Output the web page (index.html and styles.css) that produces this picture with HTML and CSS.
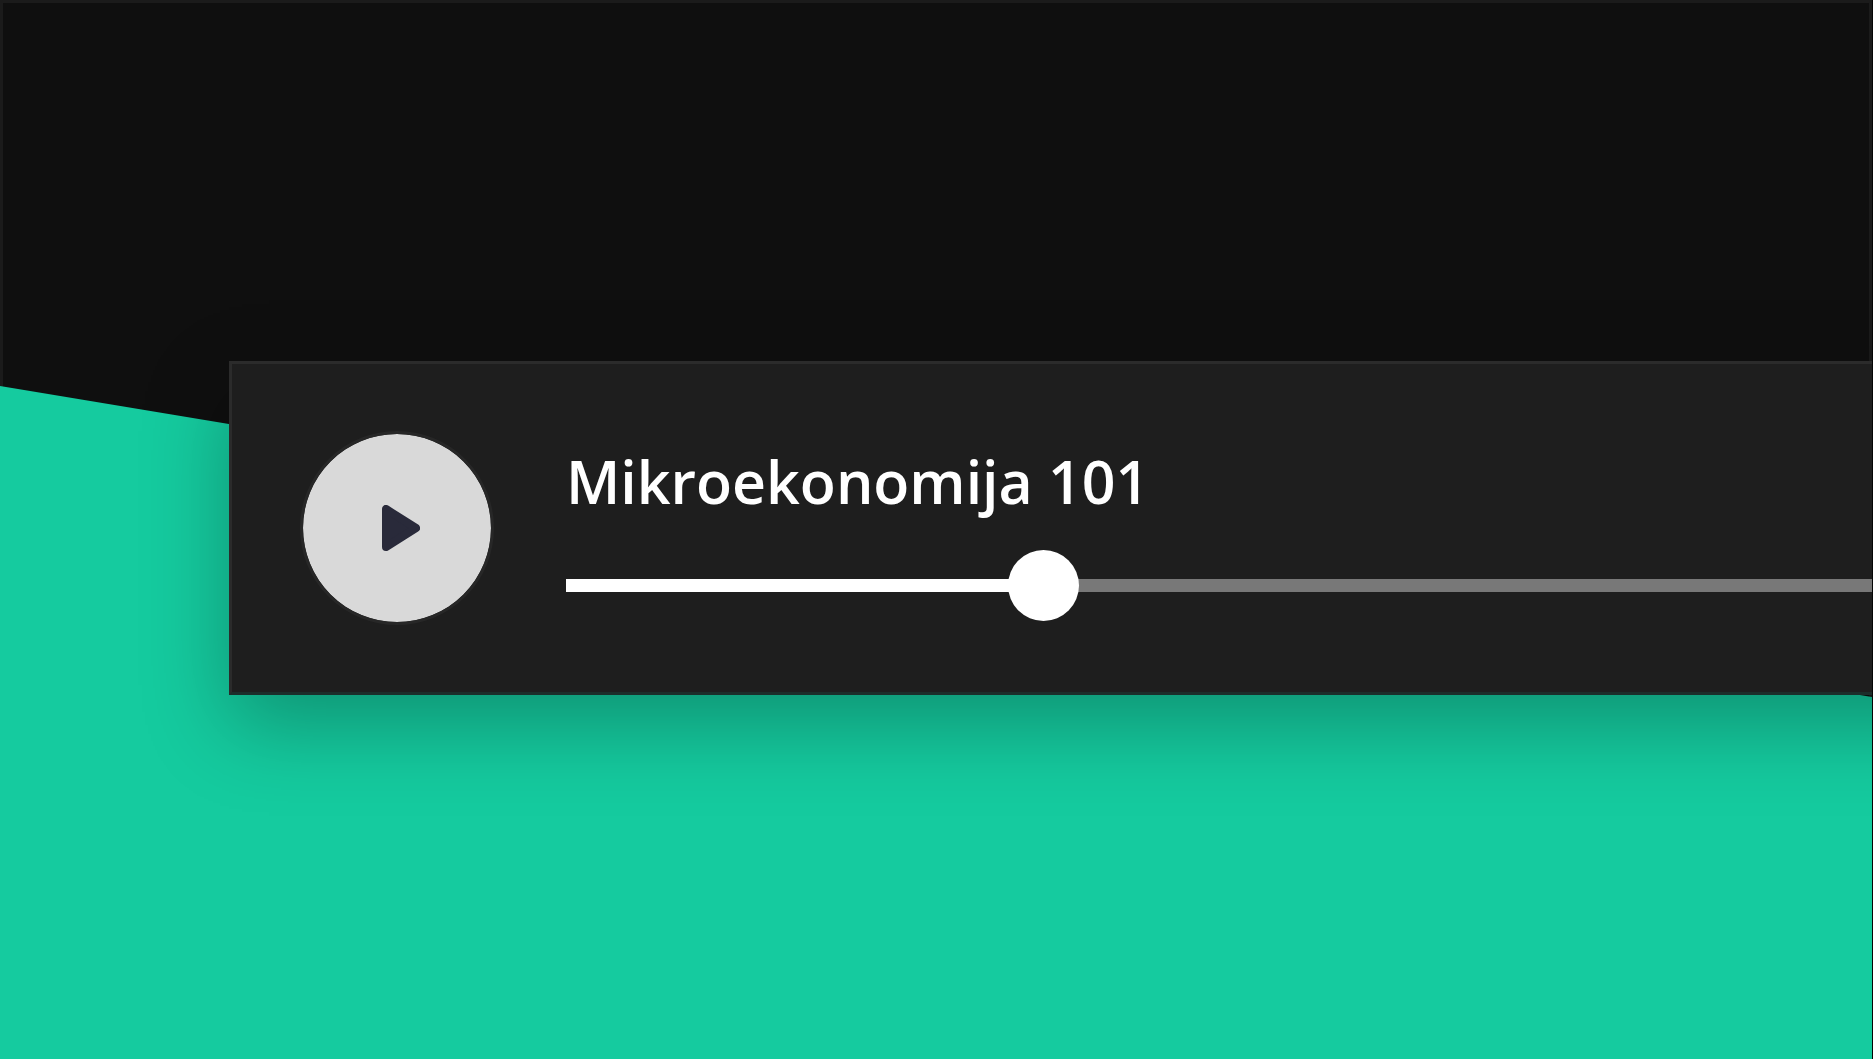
FILE: index.html
```html
<!DOCTYPE html>
<html lang="sl">
<head>
	<meta charset="UTF-8">
	<meta name="viewport" content="width=device-width, initial-scale=1.0">
	<title>Mikroekonomija 101</title>
	<link rel="stylesheet" href="styles.css">
</head>
<body>
	<main class="page">
		<div class="slope"></div>
		<section class="player">
			<button class="play" type="button" aria-label="Play">
				<svg class="play-icon" viewBox="0 0 38 46" aria-hidden="true">
					<path d="M4 4 V42 L34 23 Z" />
				</svg>
			</button>
			<div class="track">
				<label class="title" for="progress">Mikroekonomija 101</label>
				<input class="progress" id="progress" type="range" min="0" max="1000" value="358">
			</div>
		</section>
	</main>
</body>
</html>
```

FILE: styles.css
```css
:root {
	--green: #15cb9f;
	--dark: #0f0f0f;
	--frame: #1b1b1b;
	--card: #1e1e1e;
	--line: #2b2b2b;
	--rail: #787878;
}

* { box-sizing: border-box; padding: 0; margin: 0; }

body {
	background: #050505;
	font-family: "Open Sans", Lato, sans-serif;
}

/* slope and player share the same grid cell */
.page {
	display: grid;
	align-items: center;
	min-height: 100vh;
	margin-right: 1px;
	padding-bottom: 3px;
	overflow: hidden;
	background: var(--dark);
	box-shadow: inset 0 0 0 3px var(--frame);
}

.slope {
	grid-area: 1 / 1;
	align-self: stretch;
	margin-bottom: -3px;
	background: var(--green);
	clip-path: polygon(0 386px, 100% 697px, 100% 100%, 0 100%);
}

/* runs past the right edge so the shadow does not fade out there */
.player {
	grid-area: 1 / 1;
	z-index: 1;
	display: flex;
	align-items: center;
	gap: 72px;
	margin: 0 -100px 0 229px;
	padding: 67px 100px 67px 68px;
	background: var(--card);
	border: 3px solid var(--line);
	border-right: none;
	border-bottom-color: #1c2e2b;
	box-shadow: 0 30px 80px rgba(0, 0, 0, 0.28);
}

.play {
	display: flex;
	align-items: center;
	justify-content: center;
	flex: none;
	width: 194px;
	height: 194px;
	padding-left: 8px;
	background: #d9d9d9;
	background-clip: padding-box;
	border: 3px solid #272727;
	border-radius: 50%;
}

.play-icon {
	width: 38px;
	height: 46px;
	fill: #292a3a;
	stroke: #292a3a;
	stroke-width: 8;
	stroke-linejoin: round;
}

.track {
	display: flex;
	flex-direction: column;
	flex: 1;
	gap: 33px;
	padding-top: 10px;
}

.title {
	color: #fff;
	font-size: 59px;
	font-weight: 600;
	line-height: 72px;
}

.progress {
	appearance: none;
	width: 100%;
	height: 71px;
	background: linear-gradient(90deg, #fff 36%, var(--rail) 36%) center / 100% 13px no-repeat;
}

.progress::-webkit-slider-thumb {
	appearance: none;
	width: 71px;
	height: 71px;
	background: #fff;
	border-radius: 50%;
}
```
